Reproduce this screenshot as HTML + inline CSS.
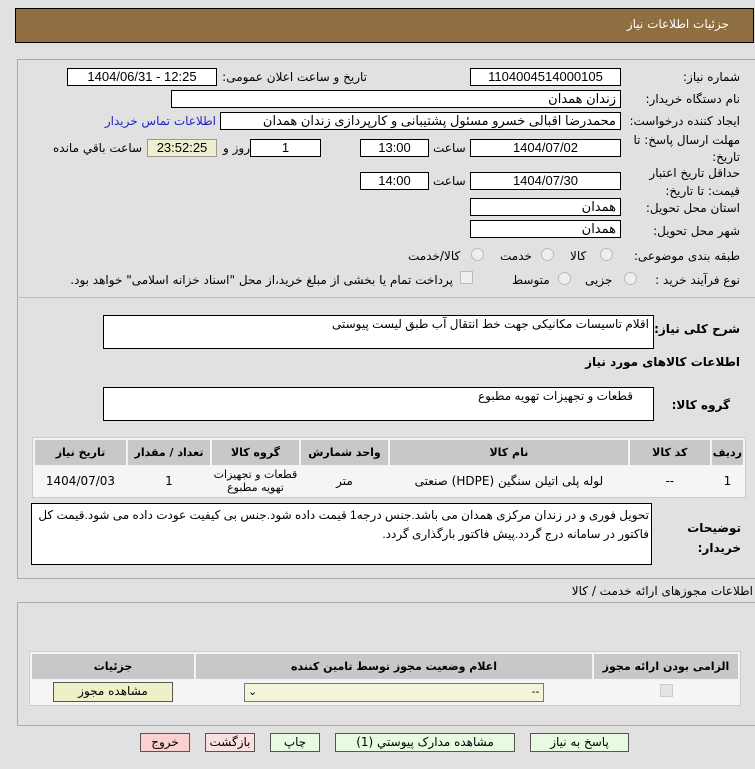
<!DOCTYPE html><html><head><meta charset="utf-8"><style>
body{margin:0;width:755px;height:769px;background:#e1e1e1;font-family:Tahoma,"DejaVu Sans","Liberation Sans",sans-serif;font-size:12px;position:relative;overflow:hidden;color:#000}
.a{position:absolute;white-space:nowrap}
.b{position:absolute;background:#fff;border:1px solid #000;box-sizing:border-box;text-align:center;font-size:13px;line-height:16px;font-family:"Liberation Sans","DejaVu Sans",sans-serif}
.r{text-align:right;padding-right:4px}
.l{position:absolute;text-align:right;direction:rtl;font-size:12px;white-space:nowrap}
.w{white-space:normal}
.rad{position:absolute;width:11px;height:11px;border:1px solid #bbb;border-radius:50%;background:#eee}
table{border-collapse:separate;border-spacing:2px;position:absolute;background:#f4f4f4;border:1px solid #ccc}
th{background:#c8c8c8;font-size:11px;height:23px;font-weight:bold}
td{background:#f5f5f5;text-align:center;font-size:12px}
.btn{position:absolute;height:19px;border:1px solid #555;box-sizing:border-box;text-align:center;font-size:12px;line-height:17px;background:#e8fbe2}
</style></head><body dir="ltr">
<div class="a" style="left:15px;top:8px;width:739px;height:35px;background:#8f6e42;border:1px solid #000;box-sizing:border-box"></div>
<div class="a" style="right:26px;top:17px;color:#fff;font-size:12px">جزئیات اطلاعات نیاز</div>
<div class="a" style="left:17px;top:59px;width:740px;height:518px;border:1px solid #aaa;border-right:none"></div>

<div class="l" style="right:15px;top:70px">شماره نیاز:</div>
<div class="b" style="left:470px;top:68px;width:151px;height:18px">1104004514000105</div>
<div class="l" style="left:222px;top:70px;width:145px">تاریخ و ساعت اعلان عمومی:</div>
<div class="b" style="left:67px;top:68px;width:150px;height:18px">1404/06/31 - 12:25</div>

<div class="l" style="right:15px;top:92px">نام دستگاه خریدار:</div>
<div class="b r" style="left:171px;top:90px;width:450px;height:18px;direction:rtl">زندان همدان</div>
<div class="l" style="right:15px;top:114px">ایجاد کننده درخواست:</div>
<div class="b r" style="left:220px;top:112px;width:401px;height:18px;direction:rtl">محمدرضا اقبالی خسرو مسئول پشتیبانی و کارپردازی زندان همدان</div>
<div class="l" style="right:539px;top:114px;color:#22c">اطلاعات تماس خریدار</div>

<div class="l w" style="right:15px;top:132px;width:110px;line-height:17px">مهلت ارسال پاسخ: تا تاریخ:</div>
<div class="b" style="left:470px;top:139px;width:151px;height:18px">1404/07/02</div>
<div class="l" style="left:433px;top:141px">ساعت</div>
<div class="b" style="left:360px;top:139px;width:69px;height:18px">13:00</div>
<div class="b" style="left:250px;top:139px;width:71px;height:18px">1</div>
<div class="l" style="left:223px;top:141px">روز و</div>
<div class="b" style="left:147px;top:139px;width:70px;height:18px;background:#efefd0;border-color:#999">23:52:25</div>
<div class="l" style="left:53px;top:141px">ساعت باقي مانده</div>

<div class="l w" style="right:15px;top:164px;width:110px;line-height:18px">حداقل تاریخ اعتبار قیمت: تا تاریخ:</div>
<div class="b" style="left:470px;top:172px;width:151px;height:18px">1404/07/30</div>
<div class="l" style="left:433px;top:174px">ساعت</div>
<div class="b" style="left:360px;top:172px;width:69px;height:18px">14:00</div>

<div class="l" style="right:15px;top:201px">استان محل تحویل:</div>
<div class="b r" style="left:470px;top:198px;width:151px;height:18px">همدان</div>
<div class="l" style="right:15px;top:224px">شهر محل تحویل:</div>
<div class="b r" style="left:470px;top:220px;width:151px;height:18px">همدان</div>

<div class="l" style="right:15px;top:249px">طبقه بندی موضوعی:</div>
<div class="rad" style="left:600px;top:248px"></div><div class="l" style="left:570px;top:249px">كالا</div>
<div class="rad" style="left:541px;top:248px"></div><div class="l" style="left:500px;top:249px">خدمت</div>
<div class="rad" style="left:471px;top:248px"></div><div class="l" style="left:408px;top:249px">كالا/خدمت</div>
<div class="l" style="right:15px;top:273px">نوع فرآیند خرید :</div>
<div class="rad" style="left:624px;top:272px"></div><div class="l" style="left:585px;top:273px">جزیی</div>
<div class="rad" style="left:558px;top:272px"></div><div class="l" style="left:512px;top:273px">متوسط</div>
<div class="a" style="left:460px;top:271px;width:11px;height:11px;border:1px solid #bbb;background:#eee"></div>
<div class="l" style="right:302px;top:273px">پرداخت تمام یا بخشی از مبلغ خرید،از محل "اسناد خزانه اسلامی" خواهد بود.</div>
<div class="a" style="left:17px;top:297px;width:738px;border-top:1px solid #bbb"></div>

<div class="l" style="right:15px;top:322px;font-weight:bold">شرح کلی نیاز:</div>
<div class="b" style="left:103px;top:315px;width:551px;height:34px;text-align:right;padding-right:4px;direction:rtl;font-size:12px">اقلام تاسیسات مکانیکی جهت خط انتقال آب طبق لیست پیوستی</div>
<div class="l" style="right:15px;top:355px;font-weight:bold">اطلاعات کالاهای مورد نیاز</div>
<div class="l" style="right:25px;top:398px;font-weight:bold">گروه کالا:</div>
<div class="b" style="left:103px;top:387px;width:551px;height:34px;text-align:right;padding-right:20px;direction:rtl;font-size:12px">قطعات و تجهیزات تهویه مطبوع</div>

<table dir="rtl" style="left:32px;top:437px;width:714px">
<tr><th style="width:25px">ردیف</th><th style="width:78px">کد کالا</th><th>نام کالا</th><th style="width:85px">واحد شمارش</th><th style="width:85px">گروه کالا</th><th style="width:80px">تعداد / مقدار</th><th style="width:89px">تاریخ نیاز</th></tr>
<tr style="height:28px"><td>1</td><td>--</td><td>لوله پلی اتیلن سنگین (HDPE) صنعتی</td><td>متر</td><td style="line-height:13px;font-size:11px">قطعات و تجهیزات تهویه مطبوع</td><td>1</td><td>1404/07/03</td></tr>
</table>

<div class="b" style="left:31px;top:503px;width:621px;height:62px;text-align:right;direction:rtl;font-size:12px;line-height:19px;padding:2px 2px 0 0">تحویل فوری و در زندان مرکزی همدان می باشد.جنس درجه1 قیمت داده شود.جنس بی کیفیت عودت داده می شود.قیمت کل فاکتور در سامانه درج گردد.پیش فاکتور بارگذاری گردد.</div>
<div class="l w" style="right:14px;top:518px;font-weight:bold;line-height:20px;width:60px">توضیحات خریدار:</div>

<div class="l" style="right:2px;top:584px">اطلاعات مجوزهای ارائه خدمت / کالا</div>
<div class="a" style="left:17px;top:602px;width:740px;height:122px;border:1px solid #aaa;border-right:none"></div>
<table dir="rtl" style="left:29px;top:651px;width:712px">
<tr><th style="width:142px">الزامی بودن ارائه مجوز</th><th>اعلام وضعیت مجوز توسط تامین کننده</th><th style="width:160px">جزئیات</th></tr>
<tr style="height:22px"><td><span style="display:inline-block;width:11px;height:11px;border:1px solid #ccc;background:#e4e4e4"></span></td>
<td><div style="margin:0 auto;width:298px;height:17px;border:1px solid #777;background:#f4f4dc;text-align:right;direction:ltr;font-size:11px;line-height:16px;position:relative">--&nbsp;<span style="position:absolute;left:3px;top:0">⌄</span></div></td>
<td><div style="margin:0 auto;width:118px;height:18px;border:1px solid #555;background:#f0f0c8;font-size:12px;line-height:17px">مشاهده مجوز</div></td></tr>
</table>

<div class="btn" style="left:530px;top:733px;width:99px">پاسخ به نیاز</div>
<div class="btn" style="left:335px;top:733px;width:180px">مشاهده مدارک پیوستي (1)</div>
<div class="btn" style="left:270px;top:733px;width:50px">چاپ</div>
<div class="btn" style="left:205px;top:733px;width:50px;background:#fbe0e0">بازگشت</div>
<div class="btn" style="left:140px;top:733px;width:50px;background:#fbd0d0">خروج</div>
</body></html>
